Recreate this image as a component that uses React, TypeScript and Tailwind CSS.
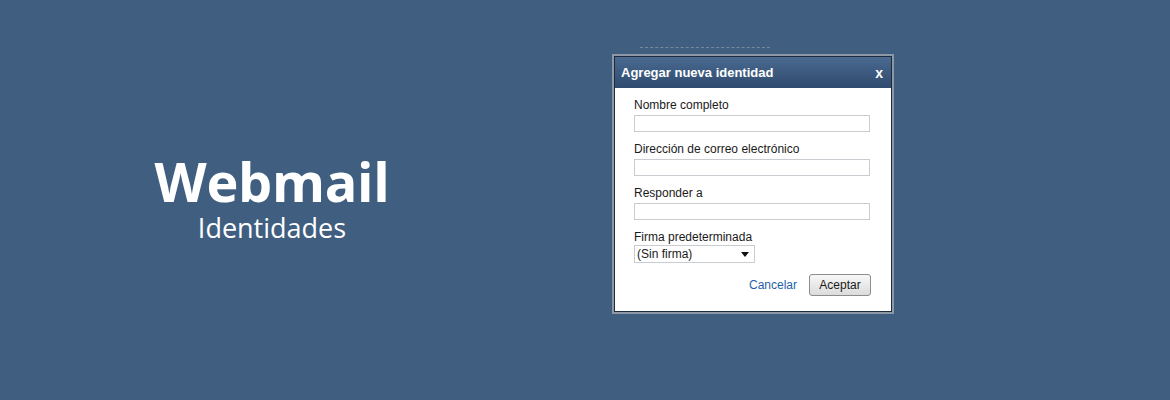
import React from 'react';

const dialogFont = { fontFamily: '"Liberation Sans", Arial, sans-serif' };

function Field({ label }: { label: string }) {
  return (
    <div className="flex flex-col">
      <label className="text-[12px] leading-[14px] text-[#1a1a1a]">{label}</label>
      <div className="mt-[3px] w-[236px] h-[17px] border border-[#c9cdd2] bg-white" />
    </div>
  );
}

export default function App() {
  return (
    <div className="w-[1170px] h-[400px] bg-[#3f5e80] flex overflow-hidden">
      {/* Heading */}
      <div className="w-[544px] pt-[153px] flex flex-col items-center text-white" style={{ fontFamily: '"Open Sans", sans-serif' }}>
        <h1 className="text-[54px] font-bold leading-[56px] tracking-[-0.3px]">Webmail</h1>
        <p className="mt-[4px] text-[27px] leading-[30px]">Identidades</p>
      </div>

      {/* Dialog */}
      <div className="ml-[68px] pt-[44px] flex flex-col" style={dialogFont}>
        <div className="ml-[28px] h-[10px] w-[130px] border-t border-dashed border-[#9aa6b4] mt-[3px] opacity-60" />
        <div className="w-[282px] border-2 border-[#8e98a5] bg-[#1c2b3e] -mt-[3px]">
          <div className="border border-[#1c2b3e]">
            <div className="h-[31px] bg-gradient-to-b from-[#4a6a90] to-[#2f4b6e] flex items-center justify-between pl-[6px] pr-[8px]">
              <span className="text-white font-bold text-[13px]">Agregar nueva identidad</span>
              <span className="text-white font-bold text-[14px] leading-none">x</span>
            </div>
            <div className="bg-white pl-[19px] pr-[20px] pt-[10px] pb-[15px] flex flex-col gap-[10px]">
              <Field label="Nombre completo" />
              <Field label="Dirección de correo electrónico" />
              <Field label="Responder a" />
              <div className="flex flex-col">
                <label className="text-[12px] leading-[14px] text-[#1a1a1a]">Firma predeterminada</label>
                <div className="mt-[1px] w-[121px] h-[18px] border border-[#c9cdd2] bg-white flex items-center justify-between pl-[2px] pr-[5px]">
                  <span className="text-[12px] text-[#1a1a1a]">(Sin firma)</span>
                  <svg width="8" height="5" viewBox="0 0 8 5">
                    <path d="M0 0 H8 L4 5 Z" fill="#111" />
                  </svg>
                </div>
              </div>
              <div className="flex items-center justify-end gap-[12px] mt-[1px]">
                <span className="text-[12px] text-[#1f5fa8]">Cancelar</span>
                <button className="w-[62px] h-[22px] rounded-[3px] border border-[#8d8d8d] bg-gradient-to-b from-[#f7f7f7] to-[#dcdcdc] text-[12px] text-[#1a1a1a]">
                  Aceptar
                </button>
              </div>
            </div>
          </div>
        </div>
      </div>
    </div>
  );
}
